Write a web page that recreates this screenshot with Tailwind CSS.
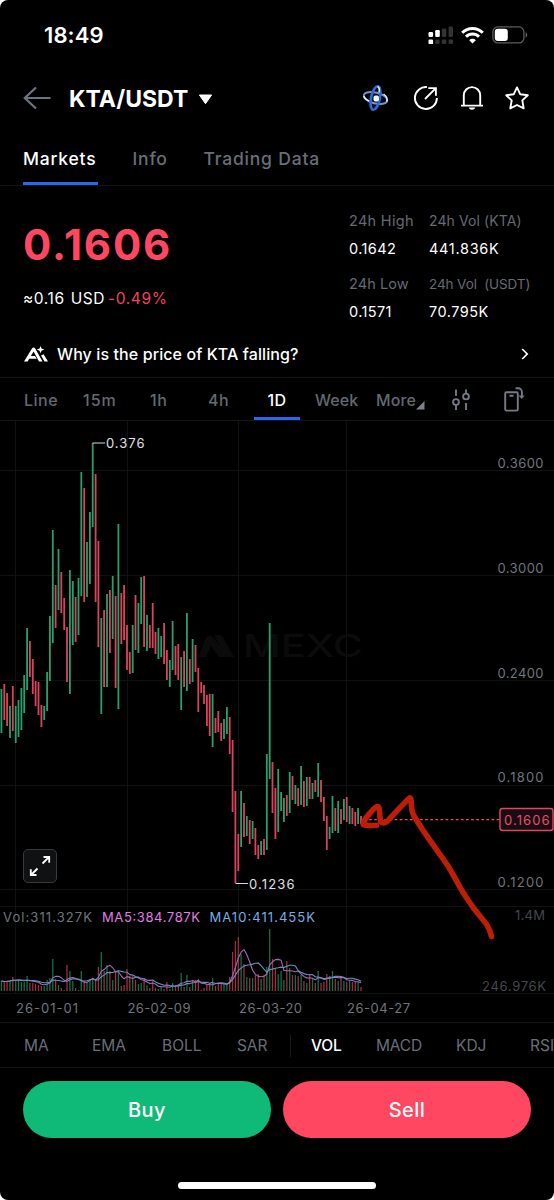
<!DOCTYPE html>
<html lang="en">
<head>
  <meta charset="UTF-8" />
  <meta name="viewport" content="width=device-width, initial-scale=1.0" />
  <title>KTA/USDT</title>
  <script src="https://cdn.jsdelivr.net/npm/@tailwindcss/browser@4"></script>
</head>
<body class="bg-white">
  <div class="w-[554px] h-[1200px] bg-black rounded-[8px] overflow-hidden flex flex-col font-['Inter',sans-serif] text-white whitespace-nowrap">

    <!-- Status bar -->
    <div class="h-[70px] shrink-0 flex items-center justify-between pl-[44px] pr-[26px]">
      <span class="text-[22px] font-semibold tracking-[0.1px]">18:49</span>
      <div class="flex items-center">
        <svg class="w-[26px] h-[20px] mr-[7px]" viewBox="0 0 26 20">
          <g fill="#fff">
            <rect x="0.5" y="7" width="4.6" height="5" rx="1.2" /><rect x="7.2" y="5" width="4.6" height="7" rx="1.2" />
            <rect x="0.5" y="14.5" width="4.6" height="4.6" rx="1.2" />
          </g>
          <g fill="#333">
            <rect x="13.9" y="3.5" width="4.4" height="8.5" rx="1.2" /><rect x="20.6" y="1.5" width="4.4" height="10.5" rx="1.2" />
            <rect x="7.2" y="14.5" width="4.4" height="4.4" rx="1.2" /><rect x="13.9" y="14.5" width="4.4" height="4.4" rx="1.2" /><rect x="20.6" y="14.5" width="4.4" height="4.4" rx="1.2" />
          </g>
        </svg>
        <svg class="w-[23px] h-[17px] mr-[8px]" viewBox="0 0 23 17" fill="none" stroke="#fff" stroke-width="3">
          <path d="M1.2 5.8a14.6 14.6 0 0 1 20.6 0M5 9.8a9.2 9.2 0 0 1 13 0" />
          <path d="M11.5 16.5L8.2 13.2a4.7 4.7 0 0 1 6.6 0z" fill="#fff" stroke="none" />
        </svg>
        <svg class="w-[36px] h-[18px]" viewBox="0 0 36 18">
          <rect x="0.9" y="0.9" width="31" height="16" rx="5" fill="none" stroke="#5c5c5c" stroke-width="1.3" />
          <rect x="2.8" y="2.8" width="13" height="12.2" rx="3" fill="#fff" />
          <path d="M33.6 6.2c2.2 1 2.2 4.6 0 5.6z" fill="#5c5c5c" />
        </svg>
      </div>
    </div>

    <!-- Pair header -->
    <div class="h-[58px] shrink-0 flex items-center pl-[23px] pr-[24px]">
      <svg class="w-[28px] h-[24px] mr-[18px] mb-[2px]" viewBox="0 0 28 24" fill="none" stroke="#6d7380" stroke-width="2.2">
        <path d="M27.5 12H1.8M13 1.5L1.8 12L13 22.5" />
      </svg>
      <h1 class="text-[23px] font-bold w-[129px]">KTA/USDT</h1>
      <svg class="w-[15px] h-[11px]" viewBox="0 0 15 11"><path d="M1.4 1h12.2L7.5 9.7z" fill="#fff" stroke="#fff" stroke-linejoin="round" /></svg>
      <div class="ml-auto flex items-center mb-[2px]">
        <svg class="w-[28px] h-[28px] mr-[22px]" viewBox="0 0 28 28" fill="none">
          <ellipse cx="12" cy="17" rx="8" ry="9" fill="#0b3fb0" opacity=".25" />
          <ellipse cx="12.5" cy="14" rx="12" ry="5.4" stroke="#7c93c4" stroke-width="1.9" transform="rotate(14 12.5 14)" />
          <ellipse cx="12.5" cy="14" rx="4.4" ry="12" stroke="#3468cc" stroke-width="2.6" transform="rotate(12 12.5 14)" />
          <path d="M1 12c0 2 3 4 5 5M20.500 10c3 2 4.500 4.500 3 7.500M14.500 2.500c2 1 2 4 1.500 6" stroke="#e4edff" stroke-width="1.500" />
          <rect x="10.500" y="11.500" width="5.500" height="6" rx="2" fill="#f4f8ff" />
        </svg>
        <svg class="w-[26px] h-[26px] mr-[21px]" viewBox="0 0 26 26" fill="none" stroke="#fff" stroke-width="1.9">
          <path d="M14 2.1A11 11 0 1 0 23.9 13M12 14L22.8 3.2M15.3 3.1h7.6v7.6" />
        </svg>
        <svg class="w-[24px] h-[26px] mr-[20px]" viewBox="0 0 24 26" fill="none" stroke="#fff" stroke-width="1.9">
          <path d="M1 20.6h22M3.8 20.6V10.3a8.2 8.2 0 0 1 16.4 0v10.3" />
          <path d="M8.8 22.6h6.4c-.7 3-5.7 3-6.4 0z" fill="#fff" stroke="none" />
        </svg>
        <svg class="w-[26px] h-[26px]" viewBox="0 0 26 26" fill="none" stroke="#fff" stroke-width="1.9" stroke-linejoin="round">
          <path d="M13 2.4l3.3 6.9 7.5 1-5.5 5.1 1.4 8-6.7-3.4-6.7 3.4 1.4-8-5.5-5.1 7.5-1z" />
        </svg>
      </div>
    </div>

    <!-- Page tabs -->
    <div class="h-[58px] shrink-0 flex items-stretch pl-[23px] border-b border-[#111215] text-[17.5px] font-medium tracking-[0.8px] text-[#6a6e7a] leading-[61px]">
      <div class="w-[75px] mr-[34.5px] text-white border-b-[3px] border-[#2b66ee]">Markets</div>
      <div class="w-[71px]">Info</div>
      <div>Trading Data</div>
    </div>

    <!-- Price and 24h figures -->
    <div class="h-[146px] shrink-0 flex pl-[23px]">
      <div class="w-[326px]">
        <div class="mt-[34px] text-[42px] leading-[50px] font-bold text-[#ff4761] tracking-[1.8px]">0.1606</div>
        <div class="mt-[18px] text-[15.5px] leading-[22px] tracking-[0.6px]">≈0.16 <span class="ml-[1px]">USD</span> <span class="text-[#f0455f] -ml-[2px]">-0.49%</span></div>
      </div>
      <div class="grid grid-cols-[80px_auto] auto-rows-min mt-[21px] text-[14.5px] leading-[28px] tracking-[0.4px]">
        <span class="text-[#666a74] tracking-[0.3px]">24h High</span><span class="text-[#666a74] text-[14px] tracking-[0.1px]">24h Vol (KTA)</span>
        <span>0.1642</span><span class="tracking-[0.7px]">441.836K</span>
        <span class="text-[#666a74] mt-[7px] tracking-[0.1px]">24h Low</span><span class="text-[#666a74] text-[13.5px] mt-[7px] -tracking-[0.1px]">24h Vol&nbsp; (USDT)</span>
        <span>0.1571</span><span class="tracking-[0.5px]">70.795K</span>
      </div>
    </div>

    <!-- AI question -->
    <div class="h-[46px] shrink-0 flex items-center pb-[1px] pl-[24px] pr-[25px] border-b border-[#131417]">
      <svg class="w-[25px] h-[17px] mr-[8px]" viewBox="0 0 25 17" fill="#fff">
        <path d="M0 15.5L8 2.5Q9.500.4 11.200 2.500L18.500 15.500H15L9.600 5.600 3.600 15.500z" />
        <path d="M5.500 10h5.500l1.700 2.800H5z" />
        <path d="M16.500 0l1 2.600 2.800 1-2.800 1.100-1 2.600-1-2.600-2.800-1.100 2.800-1zM17 9.500l2.600-1.300 4.400 7.300h-3.500z" />
      </svg>
      <span class="text-[16px] font-medium tracking-[0.1px]">Why is the price of KTA falling?</span>
      <svg class="w-[8px] h-[12px] ml-auto" viewBox="0 0 8 12" fill="none" stroke="#fff" stroke-width="1.7"><path d="M1.2 1l5 5-5 5" /></svg>
    </div>

    <!-- Chart intervals -->
    <div class="h-[43px] shrink-0 flex items-stretch pl-[24px] border-b border-[#131417] text-[16px] font-medium tracking-[0.5px] text-[#646873] leading-[44px]">
      <span class="w-[59px]">Line</span>
      <span class="w-[67px] tracking-[1px]">15m</span>
      <span class="w-[58px]">1h</span>
      <span class="w-[46px]">4h</span>
      <span class="w-[46px] mr-[15px] text-center text-white border-b-[3px] border-[#2b66ee]">1D</span>
      <span class="w-[61px] tracking-[0.1px]">Week</span>
      <span class="w-[40px] tracking-[0.1px]">More</span>
      <svg class="w-[9px] h-[9px] mt-[23px] mr-[27px]" viewBox="0 0 9 9"><path d="M8.5 0v8.5H0z" fill="#7c808a" /></svg>
      <svg class="w-[18px] h-[22px] mt-[11px] mr-[34px]" viewBox="0 0 18 22" fill="none" stroke="#747985" stroke-width="1.9">
        <path d="M4 .5v6.5M4 16v5M14 .5v3.5M14 14v7" /><circle cx="4" cy="13" r="2.9" /><circle cx="14" cy="7.5" r="2.9" />
      </svg>
      <svg class="w-[21px] h-[25px] mt-[9px]" viewBox="0 0 21 25" fill="none" stroke="#747985" stroke-width="1.9">
        <rect x="1.2" y="5.2" width="12.6" height="18.4" rx="1.4" /><path d="M5.5 8.8h4M11.5 1.3h2.8a3.6 3.6 0 0 1 3.6 3.6v4" />
        <path d="M14.6 8.5h6L17.7 12z" fill="#747985" stroke="none" />
      </svg>
    </div>

    <!-- Candles, volume and drawing -->
    <div class="relative h-[602px] shrink-0 border-b border-[#131417]">
      <svg class="block w-[554px] h-[601px]" viewBox="0 421 554 601">
        <path d="M0 470.5h554M0 575.5h554M0 680.5h554M0 785.5h554M0 889.5h554M0 906.5h554M0 993.5h554M15.5 421v572M127.5 421v572M238.5 421v572M346.5 421v572" stroke="#0f1113" fill="none" />
        <g fill="#0b0b0c">
          <path d="M198 657l8-19q4-5 8 0l14 19h-9l-8-11-5 11zM214 635h5q3 0 5 4l10 18h-8z" />
          <text x="243" y="657" class="text-[31px] font-medium" textLength="120" lengthAdjust="spacingAndGlyphs">MEXC</text>
        </g>
        <g id="candles" stroke-width="1.8"></g>
        <g id="volumes" stroke-width="1.3"></g>
        <path id="ma5" fill="none" stroke="#a06bb4" stroke-width="1.1" stroke-linejoin="round" />
        <path id="ma10" fill="none" stroke="#6c91bd" stroke-width="1.1" stroke-linejoin="round" />
        <path d="M92.5 443h12.5M235.5 883.5h12.5" stroke="#d8d8d8" stroke-width="1.2" />
        <g class="text-[13px]" fill="#e0e0e0">
          <text x="106" y="448" textLength="38.5">0.376</text>
          <text x="249" y="888.5" textLength="45.5">0.1236</text>
        </g>
        <g class="text-[13px]" fill="#71757e">
          <text x="497.5" y="468" textLength="46">0.3600</text>
          <text x="497.5" y="572.5" textLength="46">0.3000</text>
          <text x="497.5" y="677.5" textLength="46">0.2400</text>
          <text x="497.5" y="782" textLength="46">0.1800</text>
          <text x="497.5" y="887" textLength="46">0.1200</text>
          <text x="16" y="1013" textLength="62">26-01-01</text>
          <text x="127.5" y="1013" textLength="63">26-02-09</text>
          <text x="239" y="1013" textLength="63">26-03-20</text>
          <text x="347" y="1013" textLength="63">26-04-27</text>
          <text x="3" y="922" textLength="89">Vol:311.327K</text>
        </g>
        <g class="text-[13px]" fill="#45474d">
          <text x="515" y="920" textLength="30">1.4M</text>
          <text x="482" y="990.5" textLength="64">246.976K</text>
        </g>
        <text class="text-[13px]" x="102" y="922" textLength="98" fill="#e07ee8">MA5:384.787K</text>
        <text class="text-[13px]" x="209.5" y="922" textLength="105.5" fill="#77aee6">MA10:411.455K</text>
        <path d="M364 819.7h136" stroke="#ef4a60" stroke-width="1.3" stroke-dasharray="2.7 2.4" />
        <rect x="500" y="808.5" width="53" height="22" rx="2.5" fill="#180d15" stroke="#e5455c" stroke-width="1.4" />
        <text class="text-[13px]" x="504" y="824.5" textLength="45.5" fill="#ee4b62">0.1606</text>
        <path d="M376.5 825.3C369 825.8 363 825.5 363.2 824C364 819 373 809 376.5 806.8C380 805 379.5 812 380 818C380.5 825 385 824 389 819.5C396 812 403 804 409.5 798C412.5 797 410 809 413.5 815C423 832 438 851 448 866C456 879 459 887 468 900C477 914 483 919 487 925C489.5 929 490.5 932 491.5 936.5" fill="none" stroke="#bd1e08" stroke-width="5.6" stroke-linecap="round" stroke-linejoin="round" />
      </svg>
      <button class="absolute left-[23px] top-[428px] w-[34px] h-[34px] rounded-[5px] border border-[#38393c] bg-[#101113] flex items-center justify-center">
        <svg class="w-[22px] h-[22px]" viewBox="0 0 22 22" fill="none" stroke="#fff" stroke-width="1.8">
          <path d="M13.5 8.5L20 2M14.5 2h5.7v5.7M8.5 13.5L2 20M1.8 14.3v5.7H7.5" />
        </svg>
      </button>
    </div>

    <!-- Indicators -->
    <div class="h-[45px] shrink-0 flex items-center pt-[2px] pl-[24px] border-b border-[#131417] text-[15.5px] text-[#6a6e79] overflow-hidden">
      <span class="w-[68px] shrink-0">MA</span>
      <span class="w-[70px] shrink-0">EMA</span>
      <span class="w-[75px] shrink-0">BOLL</span>
      <span class="w-[53px] shrink-0 -tracking-[0.1px]">SAR</span>
      <span class="w-px h-[22px] bg-[#17181b] mr-[20px] shrink-0"></span>
      <span class="w-[65px] shrink-0 text-white font-medium -tracking-[0.2px]">VOL</span>
      <span class="w-[80px] shrink-0 -tracking-[0.2px]">MACD</span>
      <span class="w-[74px] shrink-0">KDJ</span>
      <span class="shrink-0">RSI</span>
    </div>

    <!-- Trade buttons -->
    <div class="flex gap-[12px] px-[23px] pt-[12.5px] text-[20px] font-medium tracking-[0.5px]">
      <button class="flex-1 h-[57px] pt-[1px] rounded-full bg-[#0fba78]">Buy</button>
      <button class="flex-1 h-[57px] pt-[1px] rounded-full bg-[#ff4761]">Sell</button>
    </div>

    <!-- Home indicator -->
    <div class="mt-auto mb-[11px] mx-auto w-[198px] h-[7px] rounded-full bg-white"></div>
  </div>

  <script>
    // One entry per day: direction (g up, r down), high y, low y, volume bar height
    const days = `
      g 689 733 10,r 684 720 9,r 693 726 10,g 706 738 11,r 686 731 14,g 706 743 10,g 700 737 11,g 688 730 9,g 675 713 9,g 628 690 15,
      r 641 677 8,r 659 694 8,r 681 706 7,r 682 715 6,r 705 727 5,g 706 720 5,g 672 711 11,g 616 681 13,g 530 643 32,r 585 628 12,
      g 549 610 6,r 572 613 3,r 598 630 1,r 627 682 26,g 570 694 20,g 581 645 10,r 597 642 3,g 578 635 1,g 472 596 20,r 488 602 10,
      g 542 597 9,g 512 584 12,g 443 527 12,r 474 602 12,r 541 647 24,g 618 714 39,r 610 687 20,g 594 687 26,r 590 653 20,g 576 639 11,
      r 596 688 19,g 524 709 20,r 593 644 5,r 585 640 6,r 625 670 22,r 652 674 15,g 625 673 15,r 595 650 11,g 603 653 7,g 577 624 8,
      r 576 647 13,g 615 651 6,r 625 648 3,r 603 648 10,r 632 654 3,g 628 659 2,g 636 657 4,r 623 664 2,r 650 680 9,g 660 687 2,
      g 621 670 8,r 646 675 5,r 644 680 6,g 657 710 18,r 651 687 4,g 613 691 16,r 659 684 4,g 639 682 11,r 645 672 11,r 668 712 12,
      r 682 693 1,r 685 704 3,r 695 726 7,r 694 736 8,g 694 747 13,r 718 733 5,r 711 732 7,r 723 741 8,g 719 739 7,g 707 734 8,
      r 717 754 14,r 740 812 39,r 791 883 50,r 834 871 54,g 791 847 37,r 803 837 27,g 816 836 14,r 820 844 13,g 821 839 13,r 828 855 16,
      r 845 859 17,g 841 855 12,r 839 855 16,g 754 850 24,g 623 779 62,r 762 813 32,r 788 839 23,g 769 832 17,g 792 811 20,g 798 822 11,
      r 795 816 30,g 772 813 23,r 776 800 16,g 785 804 16,r 788 806 15,g 766 805 16,r 781 807 10,g 777 806 8,r 777 799 17,g 783 799 13,
      r 780 792 8,g 763 797 20,r 780 802 8,r 797 821 9,r 816 850 17,g 827 839 15,g 796 833 20,r 808 831 12,g 801 833 10,r 809 824 15,
      g 799 820 10,r 797 822 9,g 806 824 10,r 808 824 9,r 812 826 9,g 808 824 9,r 816 824 4
    `.trim().split(',').map(row => {
      const [dir, high, low, vol] = row.trim().split(' ');
      return { up: dir === 'g', high: +high, low: +low, vol: +vol };
    });

    const volBase = 991;
    const xAt = i => (1.4 + i * 2.854).toFixed(1);

    document.getElementById('candles').innerHTML = days.map((d, i) =>
      `<path d="M${xAt(i)} ${d.high}V${d.low}" stroke="${d.up ? '#27a06c' : '#d9445c'}" />`
    ).join('');

    document.getElementById('volumes').innerHTML = days.map((d, i) =>
      `<path d="M${xAt(i)} ${volBase}v${-d.vol}" stroke="${d.up ? '#137048' : '#9c2f40'}" />`
    ).join('');

    // Moving average of the volume bars over the last n days
    function average(n) {
      return 'M' + days.map((d, i) => {
        const part = days.slice(Math.max(0, i - n + 1), i + 1);
        const mean = part.reduce((sum, p) => sum + p.vol, 0) / part.length;
        return `${xAt(i)} ${(volBase - mean).toFixed(1)}`;
      }).join('L');
    }
    document.getElementById('ma5').setAttribute('d', average(5));
    document.getElementById('ma10').setAttribute('d', average(10));
  </script>
</body>
</html>
